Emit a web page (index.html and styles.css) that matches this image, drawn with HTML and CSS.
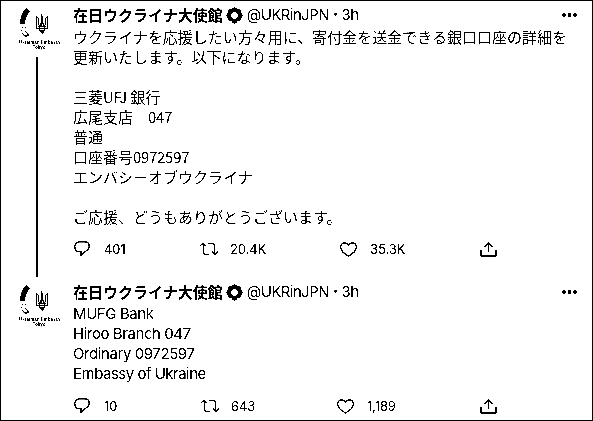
FILE: index.html
```html
<!DOCTYPE html>
<html lang="ja">
<head>
<meta charset="utf-8">
<title>在日ウクライナ大使館</title>
<link rel="stylesheet" href="styles.css">
</head>
<body>
<svg class="defs" width="0" height="0" aria-hidden="true">
  <symbol id="emblem" viewBox="0 0 22 32">
    <path d="M6 0L10 3Q5 9 5 16H0Q0 7 6 0Z"/>
    <path d="M2 19.500h1M5 19.500h1M1 22.500h1M2 25l3 3h2M5 23l3 3v2" fill="none" stroke="#000" stroke-width="1.300"/>
  </symbol>
  <symbol id="trident" viewBox="0 0 14 20" shape-rendering="crispEdges">
    <path d="M1.500 2v13M12.500 2v13M1 3.500h2M11 3.500h2M3.500 4v7M10.500 4v7M6.500 0v12M7.500 2v8M5.500 9v4M8.500 9v4M1 14.500h12M4.500 11v6M9.500 11v6M5 16.500h4M5 17.500h4M6 18.500h3M7 19.500h1M3 12.500h8" fill="none" stroke="#000" stroke-width="1"/>
  </symbol>
  <symbol id="badge" viewBox="0 0 24 24">
    <path fill-rule="evenodd" d="M23.500 12c0-1.600-.9-3-2.150-3.600.15-.45.24-.9.240-1.400 0-2.200-1.700-4-3.800-4-.5 0-.95.100-1.350.25C15.300 1.900 13.700.5 12 .5S8.700 1.900 7.600 3.250A3.700 3.700 0 0 0 6.200 3C4.100 3 2.400 4.800 2.400 7c0 .5.100.95.250 1.400C1.400 9 .5 10.400.5 12c0 1.500.8 2.800 2 3.500l-.1.500c0 2.200 1.700 4 3.800 4 .5 0 1-.1 1.400-.27C8.500 21.900 10.300 23.500 12 23.500s3.500-1.600 4.400-3.770c.4.170.9.270 1.350.27 2.100 0 3.800-1.800 3.800-4l-.1-.5c1.200-.7 2.050-2 2.050-3.500zM10 7.500h4.500l2 2v4.500l-2 2.500H10L7.500 14V9.500z"/>
  </symbol>
  <symbol id="reply" viewBox="0 0 16 16">
    <path d="M5 .8h6c2.500 0 4.200 1.700 4.200 4.500 0 2.800-1.700 4.200-4.200 5.400L7 14.200v-3.500H5C2.500 10.700.8 8.500.8 5.700S2.500.8 5 .8z" fill="none" stroke="#000" stroke-width="1.300"/>
  </symbol>
  <symbol id="retweet" viewBox="0 0 20 14">
    <path d="M.7 4.200L4 1l3.300 3.200M4.500 1.500v9q0 2 2 2H10M19.300 9.500L16 12.700l-3.300-3.200M15.500 12.500v-9q0-2-2-2H9" fill="none" stroke="#000" stroke-width="1.250"/>
  </symbol>
  <symbol id="heart" viewBox="0 0 17 15">
    <path d="M8.500 14C5.500 12.500.7 8.900.7 5 .7 2.500 2.500.8 4.700.8c1.700 0 3 .9 3.800 2.500C9.300 1.700 10.600.8 12.300.8c2.200 0 4 1.700 4 4.200 0 3.900-4.800 7.500-7.800 9z" fill="none" stroke="#000" stroke-width="1.300"/>
  </symbol>
  <symbol id="share" viewBox="0 0 17 15">
    <path d="M8.500 10V1M4.200 5l4.300-4.300L12.800 5" fill="none" stroke="#000" stroke-width="1.200"/>
    <path d="M1 8v4.500Q1 14 2.500 14h12q1.500 0 1.500-1.500V8" fill="none" stroke="#000" stroke-width="1.800"/>
  </symbol>
  <symbol id="more" viewBox="0 0 15 4">
    <circle cx="2" cy="2" r="2"/><circle cx="7.500" cy="2" r="2"/><circle cx="13" cy="2" r="2"/>
  </symbol>
</svg>
<main class="thread">
  <article class="tweet first">
    <div class="side">
      <div class="avatar">
        <div class="marks"><svg class="emblem"><use href="#emblem"/></svg><svg class="trident"><use href="#trident"/></svg></div>
        <div class="caption">Ukrainian Embassy<br>Tokyo</div>
      </div>
      <div class="line"></div>
    </div>
    <div class="content">
      <header class="head"><b class="name">在日ウクライナ大使館</b><svg class="badge"><use href="#badge"/></svg><span class="handle">@UKRinJPN <b>·</b> 3h</span><svg class="more"><use href="#more"/></svg></header>
      <div class="text ja">ウクライナを応援したい方々用に、寄付金を送金できる銀口口座の詳細を<br>更新いたします。以下になります。<br><br>三菱<span class="ufj">UFJ</span> 銀行<br>広尾支店　<span class="num">047</span><br>普通<br>口座番号<span class="num">0972597</span><br>エンバシーオブウクライナ<br><br>ご応援、どうもありがとうございます。</div>
      <footer class="actions">
        <span class="action"><svg class="reply"><use href="#reply"/></svg>401</span>
        <span class="action"><svg class="retweet"><use href="#retweet"/></svg>20.4K</span>
        <span class="action"><svg class="heart"><use href="#heart"/></svg>35.3K</span>
        <span class="action"><svg class="share"><use href="#share"/></svg></span>
      </footer>
    </div>
  </article>
  <article class="tweet">
    <div class="side">
      <div class="avatar">
        <div class="marks"><svg class="emblem"><use href="#emblem"/></svg><svg class="trident"><use href="#trident"/></svg></div>
        <div class="caption">Ukrainian Embassy<br>Tokyo</div>
      </div>
    </div>
    <div class="content">
      <header class="head"><b class="name">在日ウクライナ大使館</b><svg class="badge"><use href="#badge"/></svg><span class="handle">@UKRinJPN <b>·</b> 3h</span><svg class="more"><use href="#more"/></svg></header>
      <div class="text en" lang="en">MUFG Bank<br>Hiroo Branch 047<br>Ordinary 0972597<br><span class="embassy">Embassy of Ukraine</span></div>
      <footer class="actions">
        <span class="action"><svg class="reply"><use href="#reply"/></svg>10</span>
        <span class="action"><svg class="retweet"><use href="#retweet"/></svg>643</span>
        <span class="action"><svg class="heart"><use href="#heart"/></svg>1,189</span>
        <span class="action"><svg class="share"><use href="#share"/></svg></span>
      </footer>
    </div>
  </article>
</main>
</body>
</html>
```
FILE: styles.css
```css
* { box-sizing: border-box; }
body { margin: 0; background: #fff; color: #000; overflow: hidden; }
svg { display: block; flex: none; }
.defs { position: absolute; }
.thread {
  width: 593px;
  height: 421px;
  border: 1px solid #000;
  background: #fff;
  font: 15px/20px Inter, "Noto Sans CJK JP", sans-serif;
  filter: grayscale(1) contrast(30);
}
.tweet { display: flex; padding-top: 4px; }
.first { height: 277px; }
.side { width: 72px; flex: none; display: flex; flex-direction: column; padding-left: 18px; }
.avatar { width: 40px; padding-top: 3px; height: 52px; flex: none; }
.marks { display: flex; height: 31px; padding-left: 1px; }
.emblem { width: 22px; height: 32px; margin-right: -7px; }
.trident { width: 14px; height: 20px; margin-top: 6px; }
.caption { font: bold 4.500px/5px "Liberation Sans", sans-serif; text-align: center; white-space: nowrap; margin-top: 1px; }
.line { width: 2px; margin-left: 17px; height: 220px; background: #000; }
.content { flex: 1; min-width: 0; }
.head { display: flex; align-items: center; height: 20px; white-space: nowrap; }
.name { font-family: "Noto Sans CJK JP", sans-serif; font-weight: 700; }
.badge { width: 17px; height: 17px; margin: 0 4px 0 3px; }
.handle { letter-spacing: -.55px; }
.handle b { font-weight: 900; }
.more { width: 15px; height: 4px; margin: 0 15px 0 auto; }
.text { margin-top: 2px; white-space: nowrap; }
.ja { font-family: "Noto Sans CJK JP", sans-serif; }
.num { letter-spacing: -.3px; }
.ufj { letter-spacing: -.3px; }
.en { letter-spacing: -.42px; }
.embassy { letter-spacing: -.5px; }
.actions { display: grid; grid-template-columns: 125px 140px 141px 40px; height: 20px; margin-top: 12px; padding-left: 1px; font-size: 13px; letter-spacing: -.1px; }
.first .action:nth-child(3) { padding-left: 1px; }
.en + .actions { grid-template-columns: 126px 137px 143px 40px; }
.action { display: flex; align-items: center; }
.reply { width: 16px; height: 16px; margin-right: 14px; }
.retweet { width: 20px; height: 14px; margin-right: 11px; }
.heart { width: 17px; height: 15px; margin-right: 13px; }
.share { width: 17px; height: 15px; }
```
